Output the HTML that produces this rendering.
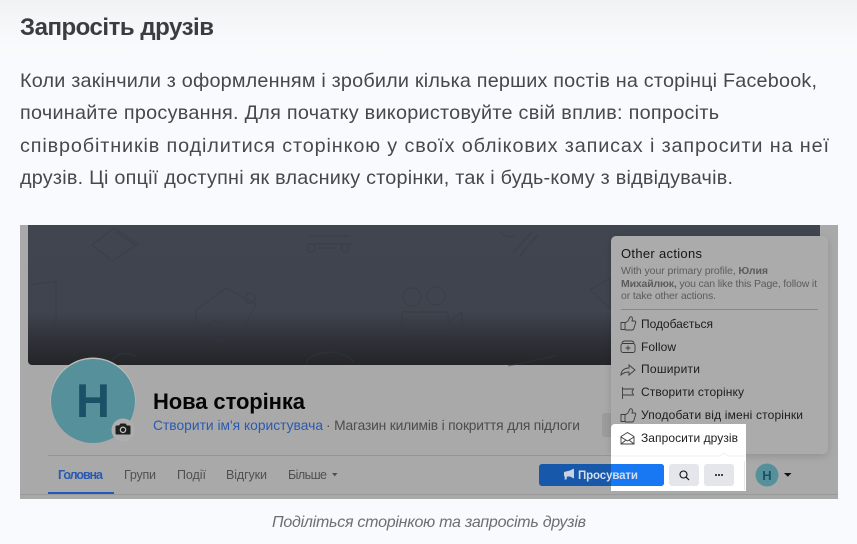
<!DOCTYPE html>
<html lang="uk"><head><meta charset="utf-8"><title>Запросіть друзів</title>
<style>
html,body{margin:0;padding:0;width:857px;height:544px;overflow:hidden;background:#f9fafd}
svg{display:block;position:absolute;left:0;top:0}
text{font-family:"Liberation Sans",sans-serif}
.b{font-size:19.8px;fill:#47474c}
.m{font-size:12px;fill:#1d1d1d}
.s{font-size:10.5px;fill:#5c5c5c}
.n{font-size:12.5px;fill:#505050}
.i{fill:none;stroke:#3c3c3c;stroke-width:.9}
.p{fill:none;stroke:#353942;stroke-width:1.4;opacity:.4}
</style></head><body>
<svg width="857" height="544" viewBox="0 0 857 544" xmlns="http://www.w3.org/2000/svg">
<defs>
<linearGradient id="top" x1="0" y1="0" x2="0" y2="1"><stop offset="0" stop-color="#f1f2f4"/><stop offset=".6" stop-color="#f8f9fb"/><stop offset="1" stop-color="#f9fafd"/></linearGradient>
<linearGradient id="cov" x1="0" y1="0" x2="0" y2="1"><stop offset="0" stop-color="#41454f"/><stop offset=".62" stop-color="#40444e"/><stop offset=".8" stop-color="#30333a"/><stop offset="1" stop-color="#232528"/></linearGradient>
<filter id="sh" x="-10%" y="-10%" width="120%" height="120%"><feDropShadow dx="0" dy="2" stdDeviation="4" flood-color="#000" flood-opacity=".15"/></filter>
</defs>
<rect width="857" height="60" fill="url(#top)"/>
<text x="20" y="35" font-size="24" font-weight="bold" fill="#3b3b40" textLength="194" lengthAdjust="spacing">Запросіть друзів</text>
<text class="b" x="20" y="87" textLength="797" lengthAdjust="spacing">Коли закінчили з оформленням і зробили кілька перших постів на сторінці Facebook,</text>
<text class="b" x="20" y="119" textLength="699" lengthAdjust="spacing">починайте просування. Для початку використовуйте свій вплив: попросіть</text>
<text class="b" x="20" y="152" textLength="809" lengthAdjust="spacing">співробітників поділитися сторінкою у своїх облікових записах і запросити на неї</text>
<text class="b" x="20" y="184" textLength="713" lengthAdjust="spacing">друзів. Ці опції доступні як власнику сторінки, так і будь-кому з відвідувачів.</text>

<rect x="20" y="225" width="818" height="274" fill="#a9a9a9"/>
<path d="M28 225H820V365H32a4 4 0 0 1-4-4Z" fill="url(#cov)"/>
<g class="p">
<path d="M92 245l22-17 24 16-26 17Z"/><path d="M116 232l20 14"/>
<path d="M310 236h40M308 244h44"/><circle cx="311" cy="248" r="4"/><circle cx="345" cy="248" r="4"/><path d="M318 248h18"/>
<path d="M500 232c8 8 14 4 16 2M512 254l20-22M520 256l18-22"/>
<path d="M30 285l26-4v40c0 6-12 10-18 8"/>
<path d="M196 310l30-22 30 16-10 20-26 18-24-20Z"/><circle cx="250" cy="298" r="5"/><circle cx="214" cy="326" r="5"/>
<circle cx="412" cy="297" r="9"/><circle cx="436" cy="296" r="9"/><path d="M402 312h46v22h-46ZM448 322l14-10v22Z"/>
<path d="M112 360c6-8 16-8 24-4"/><path d="M306 362c8-12 36-14 48 0"/><path d="M508 366l48-10"/>
<path d="M590 290l20-12v30Z"/>
</g>
<rect x="602" y="413" width="12" height="24" rx="3" fill="#9c9c9c"/>
<circle cx="93" cy="400" r="42.500" fill="#bbb"/>
<circle cx="93" cy="401" r="42" fill="#56919b"/>
<text x="93" y="417" text-anchor="middle" font-size="47" font-weight="bold" fill="#1b5166">H</text>
<circle cx="123" cy="430" r="11.500" fill="#aeaeae"/>
<path d="M116.500 425.500h2.500l1.500-2h5l1.500 2h2.500a1 1 0 0 1 1 1v7a1 1 0 0 1-1 1h-13a1 1 0 0 1-1-1v-7a1 1 0 0 1 1-1Z" fill="#1f1f1f"/>
<circle cx="123" cy="429.800" r="2.700" fill="none" stroke="#c5c5c5" stroke-width="1.200"/>
<text x="153" y="409" font-size="22" font-weight="bold" fill="#050505" textLength="152" lengthAdjust="spacing">Нова сторінка</text>
<text x="153" y="430" font-size="13.800" fill="#2a5ab0" textLength="170" lengthAdjust="spacing">Створити ім'я користувача</text>
<text x="326" y="430" font-size="13.800" fill="#4c4c4c" textLength="254" lengthAdjust="spacing">· Магазин килимів і покриття для підлоги</text>
<rect x="48" y="455" width="563" height="1" fill="#959595"/>
<rect x="20" y="494" width="818" height="1" fill="#9a9a9a"/>
<text class="n" x="58" y="479" style="fill:#2a5ab0;font-weight:bold" textLength="45" lengthAdjust="spacing">Головна</text>
<text class="n" x="124" y="479" textLength="32" lengthAdjust="spacing">Групи</text>
<text class="n" x="177" y="479" textLength="29" lengthAdjust="spacing">Події</text>
<text class="n" x="226" y="479" textLength="41" lengthAdjust="spacing">Відгуки</text>
<text class="n" x="288" y="479" textLength="39" lengthAdjust="spacing">Більше</text>
<path d="M332 473h5.500l-2.700 3.400Z" fill="#505050"/>
<rect x="48" y="492" width="66" height="2" fill="#2458b8"/>

<rect x="611" y="236" width="217" height="218" rx="5" fill="#ababab" filter="url(#sh)"/>
<text x="621" y="258" font-size="13" fill="#151515" textLength="81" lengthAdjust="spacing">Other actions</text>
<text class="s" x="621" y="274" textLength="147" lengthAdjust="spacing">With your primary profile, <tspan font-weight="bold">Юлия</tspan></text>
<text class="s" x="621" y="287" textLength="196" lengthAdjust="spacing"><tspan font-weight="bold">Михайлюк,</tspan> you can like this Page, follow it</text>
<text class="s" x="621" y="299" textLength="95" lengthAdjust="spacing">or take other actions.</text>
<rect x="621" y="309" width="197" height="1" fill="#888"/>
<text class="m" x="641" y="328" textLength="72" lengthAdjust="spacing">Подобається</text>
<text class="m" x="641" y="351" textLength="35" lengthAdjust="spacing">Follow</text>
<text class="m" x="641" y="373" textLength="59" lengthAdjust="spacing">Поширити</text>
<text class="m" x="641" y="396" textLength="103" lengthAdjust="spacing">Створити сторінку</text>
<text class="m" x="641" y="419" textLength="162" lengthAdjust="spacing">Уподобати від імені сторінки</text>
<g class="i">
<path d="M621 322.500h4v7h-4ZM625 323l3-2 2-4c2-1 3 1 2 4h2.500c1 0 1.500 1 1 2l-1.500 5c0 1-1 2-2 2h-7"/>
<path d="M622 343a3 3 0 0 1 3-2h6a3 3 0 0 1 3 2M623 343.500h10a2 2 0 0 1 2 2v5a2 2 0 0 1-2 2h-10a2 2 0 0 1-2-2v-5a2 2 0 0 1 2-2ZM628 345.500v5M625.500 348h5"/>
<path d="M621 375c0-4 3-7 8-7v-3l6 5-6 5v-3c-3 0-6 1-8 3Z"/>
<path d="M622.500 387v12M622.500 389h11l-1.500 3 1.500 3h-11"/>
<path d="M621 414.500h4v7h-4ZM625 415l3-2 2-4c2-1 3 1 2 4h2.500c1 0 1.500 1 1 2l-1.500 5c0 1-1 2-2 2h-7"/>
</g>

<path d="M611 428a4 4 0 0 1 4-4H746V491H611Z" fill="#fff"/>
<path d="M611 456H720l4-3 4 3H746" fill="none" stroke="#f0f0f0" stroke-width="1"/>
<path d="M621 436.500l6.500-4 6.500 4v7.500h-13ZM621 437l6.500 4 6.500-4M621 444l5-4M634 444l-5-4" fill="none" stroke="#3c3c3c" stroke-width=".9"/>
<text class="m" x="641" y="442" textLength="97" lengthAdjust="spacing">Запросити друзів</text>

<rect x="539" y="464" width="125" height="22" rx="3" fill="#1858aa"/>
<path d="M611 464H661a3 3 0 0 1 3 3v16a3 3 0 0 1-3 3H611Z" fill="#1877f2"/>
<path d="M564 472l6-1.500 4-2v10l-4-2-3 0-.5 3h-2l.5-3h-1Z" fill="#c6d3e4"/>
<text x="578" y="479" font-size="11.500" font-weight="bold" fill="#d4deeb" textLength="60" lengthAdjust="spacing">Просувати</text>
<rect x="669" y="464" width="30" height="22" rx="3" fill="#e4e6eb"/>
<circle cx="683.500" cy="474.500" r="3.500" fill="none" stroke="#111" stroke-width="1.100"/><path d="M686 477l3 3" stroke="#111" stroke-width="1.200"/>
<rect x="704" y="464" width="30" height="22" rx="3" fill="#e4e6eb"/>
<circle cx="716" cy="475" r="1" fill="#111"/><circle cx="719" cy="475" r="1" fill="#111"/><circle cx="722" cy="475" r="1" fill="#111"/>
<rect x="744" y="461" width="1" height="29" fill="#e8e8e8"/>
<circle cx="767" cy="475" r="11.500" fill="#56919b"/>
<text x="767" y="480" text-anchor="middle" font-size="13" font-weight="bold" fill="#1b5166">H</text>
<path d="M784 473h7.500l-3.700 3.800Z" fill="#111"/>

<text x="272" y="527" font-size="16" font-style="italic" fill="#6e6e72" textLength="314" lengthAdjust="spacing">Поділіться сторінкою та запросіть друзів</text>
</svg>
</body></html>
